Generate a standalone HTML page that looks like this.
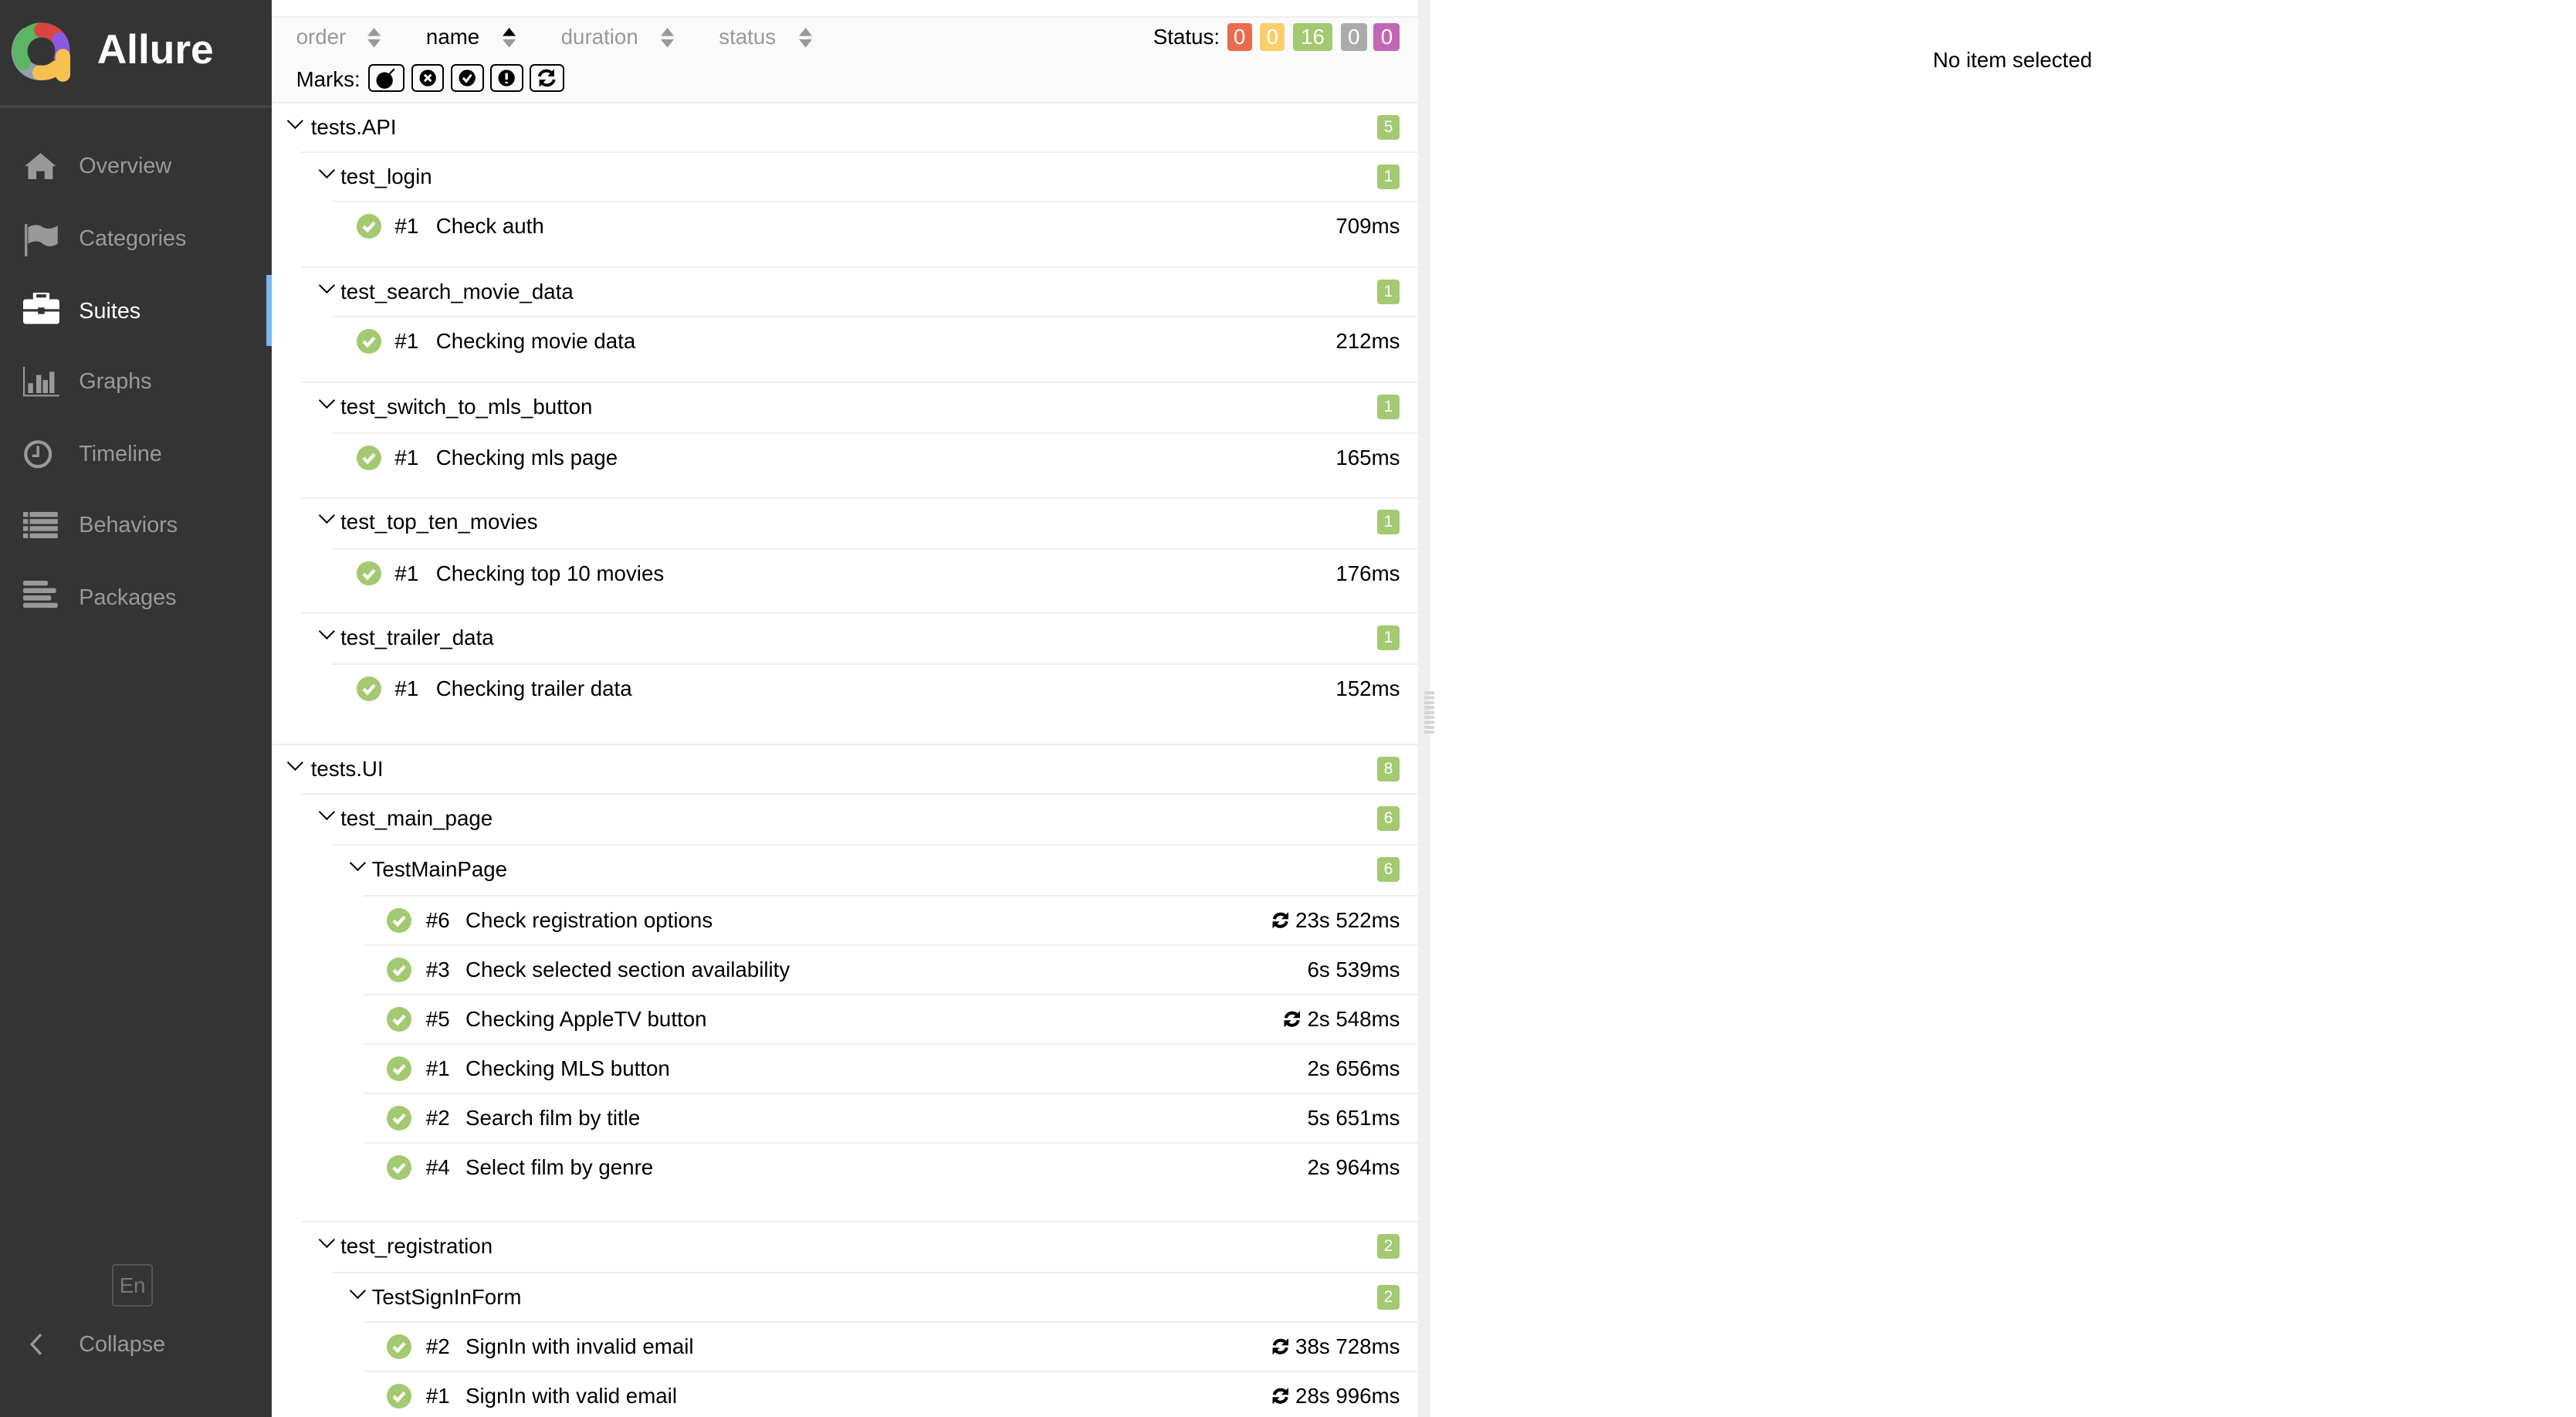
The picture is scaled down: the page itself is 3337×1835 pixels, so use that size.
<!DOCTYPE html>
<html><head><meta charset="utf-8"><style>
html,body{margin:0;padding:0;background:#fff;overflow:hidden}
#w{zoom:2.131;width:1566px;height:861px;position:relative;font-family:"Liberation Sans",Arial,sans-serif;color:#000}
.a{position:absolute}
#side{left:0;top:0;width:165px;height:861px;background:#343434}
.nav{position:absolute;left:48px;font-size:13.5px;color:#999;line-height:16px}
.ic{position:absolute;left:14px}
.row{position:absolute;right:704px;height:30px;border-top:1px solid #eee;box-sizing:border-box;font-size:13px}
.row .t{position:absolute;top:7px;white-space:nowrap}
.chev{position:absolute;top:7px;width:6px;height:6px;border-right:1.4px solid #000;border-bottom:1.4px solid #000;transform:rotate(45deg)}
.badge{position:absolute;right:11px;top:7px;width:14px;height:15px;border-radius:2px;background:#a3c971;color:#fff;font-size:10px;text-align:center;line-height:15px}
.ok{position:absolute;top:7px;width:15px;height:15px;border-radius:50%;background:#a3c971}
.dur{position:absolute;right:11px;top:7px;white-space:nowrap}
.st{position:absolute;top:14px;height:17px;border-radius:2px;color:#fff;font-size:13px;text-align:center;line-height:17px}
.mk{position:absolute;top:39px;height:17px;border:1.3px solid #000;border-radius:3px;box-sizing:border-box}
.hd{position:absolute;top:15px;font-size:13px;color:#999}
.rf{display:inline-block;vertical-align:-1px;margin-right:3px}
</style></head><body><div id="w">
<div id="side" class="a">
<svg class="a" style="left:4px;top:12px" width="42" height="40" viewBox="0 0 42 40">
<g fill="none" stroke-width="9" stroke-linecap="round">
<path d="M19 32 A13 13 0 0 1 12 9" stroke="#95a0ae"/>
<path d="M10 26 A13 13 0 0 1 21 6" stroke="#5bb562"/>
<path d="M21 6 A13 13 0 0 1 32 12" stroke="#d7473f"/>
<path d="M32 12 A13 13 0 0 1 33 23" stroke="#8a5be0"/>
<path d="M34 22 L34 33" stroke="#f6c150"/>
<path d="M20 32 A13 13 0 0 0 30 29" stroke="#f6c150"/>
</g></svg>
<div class="a" style="left:59px;top:16px;font-size:25px;font-weight:bold;color:#fff">Allure</div>
<div class="a" style="left:0;top:64px;width:165px;height:1.5px;background:#454545"></div>
<svg class="ic" style="top:92px" width="21" height="17" viewBox="0 0 21 17"><path d="M10.5 1 L1 9 L3 9 L3 17 L8 17 L8 12 L13 12 L13 17 L18 17 L18 9 L20 9 Z" fill="#999"/></svg>
<div class="nav" style="top:93px">Overview</div>
<svg class="ic" style="top:135px" width="22" height="21" viewBox="0 0 22 21"><rect x="1" y="1" width="1.5" height="20" fill="#999"/><path d="M3 3 Q8 0 12 3 Q16 5 21 2 L21 13 Q16 16 12 13 Q8 10 3 13Z" fill="#999"/></svg>
<div class="nav" style="top:137px">Categories</div>
<svg class="ic" style="top:178px" width="22" height="19" viewBox="0 0 22 19"><rect x="7" y="0" width="8" height="4" rx="1" fill="none" stroke="#fff" stroke-width="2"/><rect x="0" y="4" width="22" height="15" rx="1.5" fill="#fff"/><rect x="0" y="10" width="22" height="1.5" fill="#343434"/><rect x="9" y="9" width="4" height="4" fill="#343434"/></svg>
<div class="nav" style="top:181px;color:#fff">Suites</div>
<div class="a" style="left:162px;top:167px;width:3px;height:43px;background:#7ab6f0"></div>
<svg class="ic" style="top:223px" width="22" height="18" viewBox="0 0 22 18"><path d="M0.5 0 V17.5 H22" stroke="#999" fill="none"/><rect x="3" y="10" width="3" height="6" fill="#999"/><rect x="8" y="5" width="3" height="11" fill="#999"/><rect x="12" y="8" width="3" height="8" fill="#999"/><rect x="16" y="3" width="3" height="13" fill="#999"/></svg>
<div class="nav" style="top:224px">Graphs</div>
<svg class="ic" style="top:267px" width="18" height="18" viewBox="0 0 18 18"><circle cx="9" cy="9" r="7.5" stroke="#999" stroke-width="2" fill="none"/><path d="M9 4 V10 H5.5" stroke="#999" stroke-width="1.6" fill="none"/></svg>
<div class="nav" style="top:268px">Timeline</div>
<svg class="ic" style="top:311px" width="21" height="16" viewBox="0 0 21 16"><g fill="#999"><rect x="0" y="0" width="3" height="3"/><rect x="4" y="0" width="17" height="3"/><rect x="0" y="4.3" width="3" height="3"/><rect x="4" y="4.3" width="17" height="3"/><rect x="0" y="8.6" width="3" height="3"/><rect x="4" y="8.6" width="17" height="3"/><rect x="0" y="13" width="3" height="3"/><rect x="4" y="13" width="17" height="3"/></g></svg>
<div class="nav" style="top:311px">Behaviors</div>
<svg class="ic" style="top:353px" width="21" height="17" viewBox="0 0 21 17"><g fill="#999"><rect x="0" y="0" width="15" height="3" rx="1"/><rect x="0" y="4.5" width="20" height="3" rx="1"/><rect x="0" y="9" width="17" height="3" rx="1"/><rect x="0" y="13.5" width="21" height="3" rx="1"/></g></svg>
<div class="nav" style="top:355px">Packages</div>
<div class="a" style="left:68px;top:768px;width:25px;height:26px;border:1px solid #555;border-radius:2px;box-sizing:border-box;color:#777;font-size:13px;text-align:center;line-height:24px">En</div>
<svg class="a" style="left:18px;top:810px" width="8" height="14" viewBox="0 0 8 14"><path d="M7 1 L1.5 7 L7 13" stroke="#999" stroke-width="1.6" fill="none"/></svg>
<div class="nav" style="top:809px">Collapse</div>
</div>

<div class="a" style="left:165px;top:10px;width:697px;height:52px;background:#fafafa;border-top:1px solid #eee"></div>
<div class="hd" style="left:180px">order</div><svg class="a" style="left:223px;top:17px" width="9" height="12"><path d="M4.5 0 L8.5 5 H0.5Z M4.5 12 L8.5 7 H0.5Z" fill="#999"/></svg>
<div class="hd" style="left:259px;color:#000">name</div><svg class="a" style="left:305px;top:17px" width="9" height="12"><path d="M4.5 0 L8.5 5 H0.5Z" fill="#000"/><path d="M4.5 12 L8.5 7 H0.5Z" fill="#999"/></svg>
<div class="hd" style="left:341px">duration</div><svg class="a" style="left:401px;top:17px" width="9" height="12"><path d="M4.5 0 L8.5 5 H0.5Z M4.5 12 L8.5 7 H0.5Z" fill="#999"/></svg>
<div class="hd" style="left:437px">status</div><svg class="a" style="left:485px;top:17px" width="9" height="12"><path d="M4.5 0 L8.5 5 H0.5Z M4.5 12 L8.5 7 H0.5Z" fill="#999"/></svg>
<div class="a" style="left:701px;top:15px;font-size:13px">Status:</div>
<div class="st" style="left:746px;width:15px;background:#ec6a4d">0</div>
<div class="st" style="left:766px;width:15px;background:#f8cf6a">0</div>
<div class="st" style="left:786px;width:24px;background:#a3c971">16</div>
<div class="st" style="left:815px;width:16px;background:#aaa">0</div>
<div class="st" style="left:835px;width:16px;background:#c466b8">0</div>
<div class="a" style="left:180px;top:41px;font-size:13px">Marks:</div>
<div class="mk" style="left:224px;width:22px"><svg width="20" height="15" viewBox="0 0 20 15"><circle cx="9" cy="9" r="5" fill="#000"/><path d="M12 5 L15 2" stroke="#000"/></svg></div>
<div class="mk" style="left:250px;width:20px"><svg width="18" height="15" viewBox="0 0 18 15"><circle cx="9" cy="7.5" r="5" fill="#000"/><path d="M7 5.5 L11 9.5 M11 5.5 L7 9.5" stroke="#fff" stroke-width="1.4"/></svg></div>
<div class="mk" style="left:274px;width:20px"><svg width="18" height="15" viewBox="0 0 18 15"><circle cx="9" cy="7.5" r="5" fill="#000"/><path d="M6.5 7.5 L8.5 9.5 L11.5 5.5" stroke="#fff" stroke-width="1.4" fill="none"/></svg></div>
<div class="mk" style="left:298px;width:20px"><svg width="18" height="15" viewBox="0 0 18 15"><circle cx="9" cy="7.5" r="5" fill="#000"/><path d="M9 4.5 V8.5 M9 9.8 V10.8" stroke="#fff" stroke-width="1.6"/></svg></div>
<div class="mk" style="left:322px;width:21px"><svg width="19" height="15" viewBox="0 0 19 15"><path d="M5 6.5 A4.5 4.5 0 0 1 13 5 M14 8.5 A4.5 4.5 0 0 1 6 10" stroke="#000" stroke-width="1.8" fill="none"/><path d="M14 2 V6.5 H10Z M5 13 V8.5 H9Z" fill="#000"/></svg></div>

<div class="a" style="left:862px;top:0;width:7px;height:861px;background:#eeeff1"></div>
<div class="a" style="left:866px;top:420px;width:6px;height:26px;background:repeating-linear-gradient(#d6d6d6 0 2px,transparent 2px 3px)"></div>
<div class="a" style="left:1175px;top:29px;font-size:13px">No item selected</div>

<div class="row" style="top:62px;left:166px"><i class="chev" style="left:10px"></i><span class="t" style="left:23px">tests.API</span><span class="badge">5</span></div>
<div class="row" style="top:92px;left:183px"><i class="chev" style="left:12px"></i><span class="t" style="left:24px">test_login</span><span class="badge">1</span></div>
<div class="row" style="top:122px;left:202px"><i class="ok" style="left:15px"></i><span class="t" style="left:38px">#1</span><span class="t" style="left:63px">Check auth</span><span class="dur">709ms</span></div>
<div class="row" style="top:162px;left:183px"><i class="chev" style="left:12px"></i><span class="t" style="left:24px">test_search_movie_data</span><span class="badge">1</span></div>
<div class="row" style="top:192px;left:202px"><i class="ok" style="left:15px"></i><span class="t" style="left:38px">#1</span><span class="t" style="left:63px">Checking movie data</span><span class="dur">212ms</span></div>
<div class="row" style="top:232px;left:183px"><i class="chev" style="left:12px"></i><span class="t" style="left:24px">test_switch_to_mls_button</span><span class="badge">1</span></div>
<div class="row" style="top:263px;left:202px"><i class="ok" style="left:15px"></i><span class="t" style="left:38px">#1</span><span class="t" style="left:63px">Checking mls page</span><span class="dur">165ms</span></div>
<div class="row" style="top:302px;left:183px"><i class="chev" style="left:12px"></i><span class="t" style="left:24px">test_top_ten_movies</span><span class="badge">1</span></div>
<div class="row" style="top:333px;left:202px"><i class="ok" style="left:15px"></i><span class="t" style="left:38px">#1</span><span class="t" style="left:63px">Checking top 10 movies</span><span class="dur">176ms</span></div>
<div class="row" style="top:372px;left:183px"><i class="chev" style="left:12px"></i><span class="t" style="left:24px">test_trailer_data</span><span class="badge">1</span></div>
<div class="row" style="top:403px;left:202px"><i class="ok" style="left:15px"></i><span class="t" style="left:38px">#1</span><span class="t" style="left:63px">Checking trailer data</span><span class="dur">152ms</span></div>

<div class="row" style="top:452px;left:166px"><i class="chev" style="left:10px"></i><span class="t" style="left:23px">tests.UI</span><span class="badge">8</span></div>
<div class="row" style="top:482px;left:183px"><i class="chev" style="left:12px"></i><span class="t" style="left:24px">test_main_page</span><span class="badge">6</span></div>
<div class="row" style="top:513px;left:202px"><i class="chev" style="left:12px"></i><span class="t" style="left:24px">TestMainPage</span><span class="badge">6</span></div>
<div class="row" style="top:544px;left:221px"><i class="ok" style="left:14px"></i><span class="t" style="left:38px">#6</span><span class="t" style="left:62px">Check registration options</span><span class="dur"><i class="rf"></i>23s 522ms</span></div>
<div class="row" style="top:574px;left:221px"><i class="ok" style="left:14px"></i><span class="t" style="left:38px">#3</span><span class="t" style="left:62px">Check selected section availability</span><span class="dur">6s 539ms</span></div>
<div class="row" style="top:604px;left:221px"><i class="ok" style="left:14px"></i><span class="t" style="left:38px">#5</span><span class="t" style="left:62px">Checking AppleTV button</span><span class="dur"><i class="rf"></i>2s 548ms</span></div>
<div class="row" style="top:634px;left:221px"><i class="ok" style="left:14px"></i><span class="t" style="left:38px">#1</span><span class="t" style="left:62px">Checking MLS button</span><span class="dur">2s 656ms</span></div>
<div class="row" style="top:664px;left:221px"><i class="ok" style="left:14px"></i><span class="t" style="left:38px">#2</span><span class="t" style="left:62px">Search film by title</span><span class="dur">5s 651ms</span></div>
<div class="row" style="top:694px;left:221px"><i class="ok" style="left:14px"></i><span class="t" style="left:38px">#4</span><span class="t" style="left:62px">Select film by genre</span><span class="dur">2s 964ms</span></div>
<div class="row" style="top:742px;left:183px"><i class="chev" style="left:12px"></i><span class="t" style="left:24px">test_registration</span><span class="badge">2</span></div>
<div class="row" style="top:773px;left:202px"><i class="chev" style="left:12px"></i><span class="t" style="left:24px">TestSignInForm</span><span class="badge">2</span></div>
<div class="row" style="top:803px;left:221px"><i class="ok" style="left:14px"></i><span class="t" style="left:38px">#2</span><span class="t" style="left:62px">SignIn with invalid email</span><span class="dur"><i class="rf"></i>38s 728ms</span></div>
<div class="row" style="top:833px;left:221px"><i class="ok" style="left:14px"></i><span class="t" style="left:38px">#1</span><span class="t" style="left:62px">SignIn with valid email</span><span class="dur"><i class="rf"></i>28s 996ms</span></div>
</div>
<script>
document.querySelectorAll('.ok').forEach(function(e){e.innerHTML='<svg width="15" height="15" viewBox="0 0 15 15" style="display:block"><path d="M4.2 7.6 L6.6 10 L10.8 5.3" stroke="#fff" stroke-width="2" fill="none"/></svg>';});
document.querySelectorAll('.rf').forEach(function(e){e.innerHTML='<svg width="12" height="11" viewBox="0 0 12 11" style="display:block"><path d="M2.2 4.8 A4 4 0 0 1 9 3 M9.8 6.2 A4 4 0 0 1 3 8" stroke="#000" stroke-width="1.9" fill="none"/><path d="M10.8 0.5 V4.8 H6.5Z M1.2 10.5 V6.2 H5.5Z" fill="#000"/></svg>';});
</script>
</body></html>
